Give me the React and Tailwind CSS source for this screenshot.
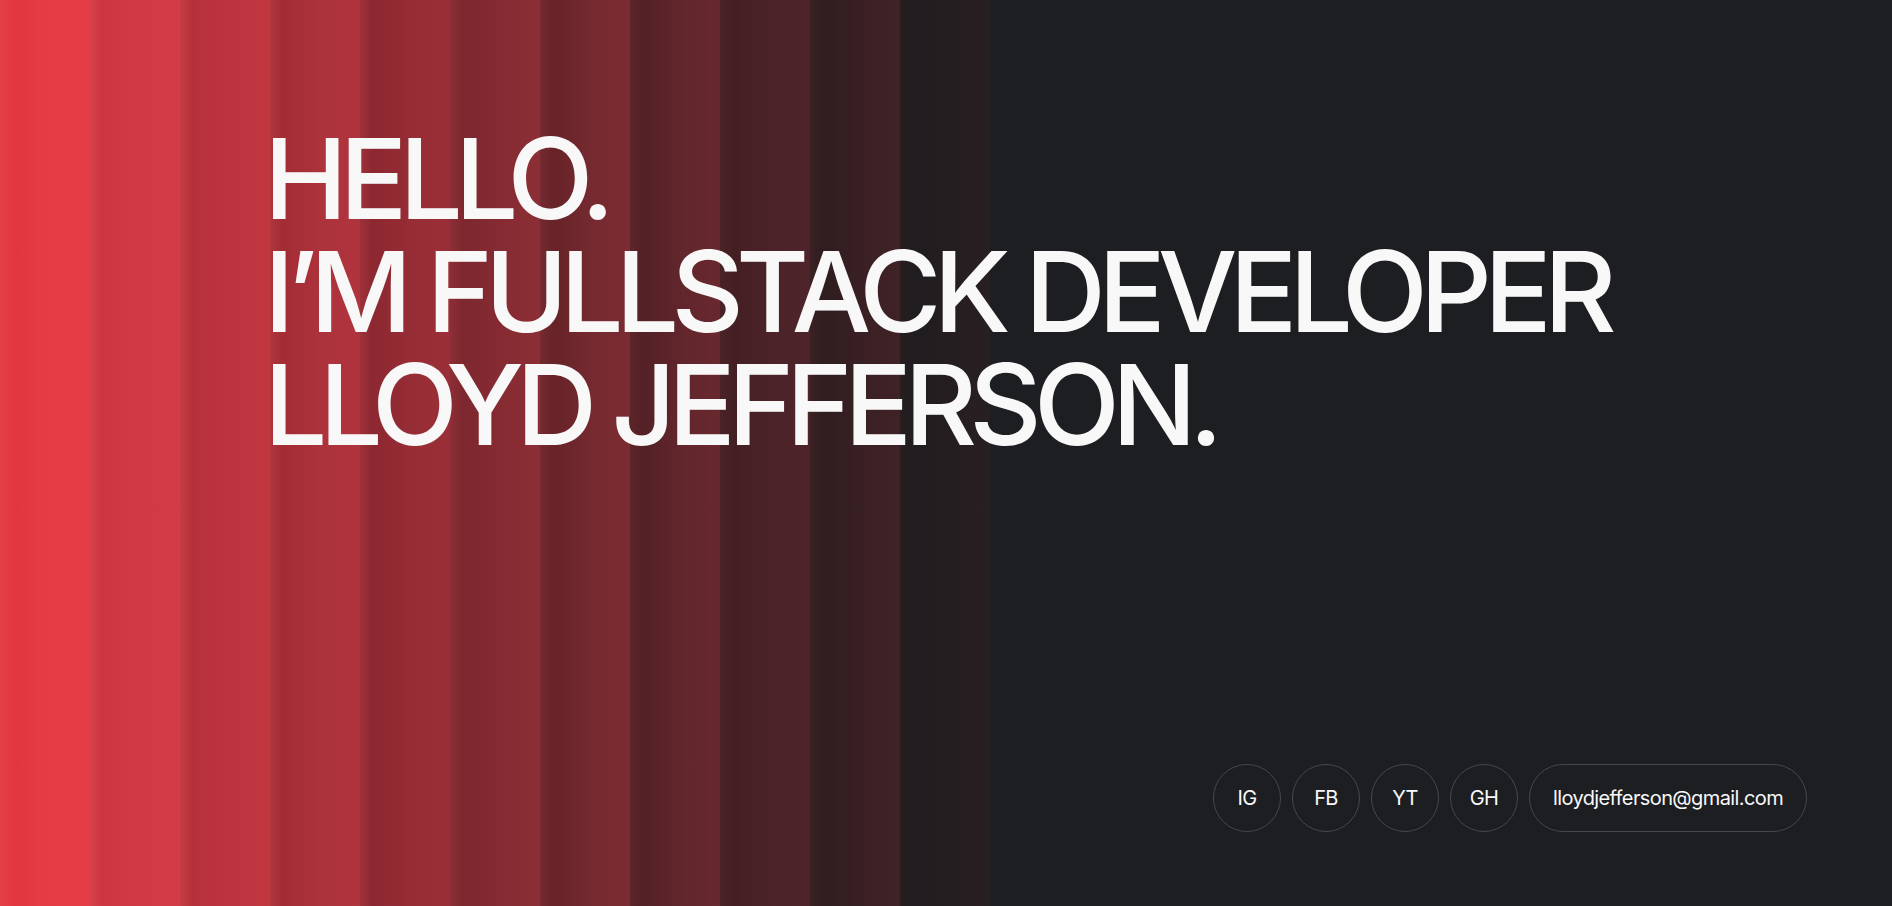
import React from "react";

// reeded-glass stripes, left to right
const stripes = [
  "bg-[linear-gradient(90deg,#e5404a_0%,#e1363f_18%,#e43b46_45%,#e53c46_100%)]",
  "bg-[linear-gradient(90deg,#d6434c_0%,#cd3540_14%,#d13a44_50%,#d33b46_100%)]",
  "bg-[linear-gradient(90deg,#c43c46_0%,#b6303a_14%,#bd343f_50%,#c03740_100%)]",
  "bg-[linear-gradient(90deg,#b0363f_0%,#a22c35_14%,#ac323b_55%,#b0343d_100%)]",
  "bg-[linear-gradient(90deg,#9e313a_0%,#8d2830_14%,#962c35_55%,#9b2f38_100%)]",
  "bg-[linear-gradient(90deg,#8c2e35_0%,#7d272e_16%,#872b33_60%,#8b2e35_100%)]",
  "bg-[linear-gradient(90deg,#732a30_0%,#672328_16%,#752a30_60%,#7b2b31_100%)]",
  "bg-[linear-gradient(90deg,#5c2429_0%,#532126_16%,#62262c_60%,#68282e_100%)]",
  "bg-[linear-gradient(90deg,#4a2226_0%,#431f23_16%,#4b2328_60%,#4e242a_100%)]",
  "bg-[linear-gradient(90deg,#3a2023_0%,#2f1d20_16%,#3a2024_60%,#402225_100%)]",
  "bg-[linear-gradient(90deg,#261e21_0%,#201c1f_16%,#251e21_60%,#281f22_100%)]",
];

const socials = ["IG", "FB", "YT", "GH"];

export default function App() {
  return (
    <div
      className="relative h-[906px] w-full overflow-hidden bg-[#1d1e22] text-[#f8f8f8]"
      style={{ fontFamily: "Inter, 'Noto Sans', sans-serif" }}
    >
      {/* striped background */}
      <div className="absolute inset-y-0 left-0 flex">
        {stripes.map((s, i) => (
          <div key={i} className={`h-full w-[90px] ${s}`} />
        ))}
      </div>

      <div className="relative flex h-full flex-col justify-between pl-[264px] pr-[85px] pt-[122px] pb-[74px]">
        <h1 className="whitespace-nowrap text-[112px] font-medium leading-[113px] tracking-[-0.069em]">
          HELLO.
          <br />
          I’M FULLSTACK DEVELOPER
          <br />
          LLOYD JEFFERSON.
        </h1>

        <div className="flex justify-end gap-[11px]">
          {socials.map((s) => (
            <a
              key={s}
              href="#"
              className="flex h-[68px] w-[68px] items-center justify-center rounded-full border border-[#46474c] text-[20px] tracking-[-0.03em]"
            >
              {s}
            </a>
          ))}
          <a
            href="#"
            className="flex h-[68px] w-[278px] items-center justify-center rounded-full border border-[#46474c] text-[20px] tracking-[-0.03em]"
          >
            lloydjefferson@gmail.com
          </a>
        </div>
      </div>
    </div>
  );
}
